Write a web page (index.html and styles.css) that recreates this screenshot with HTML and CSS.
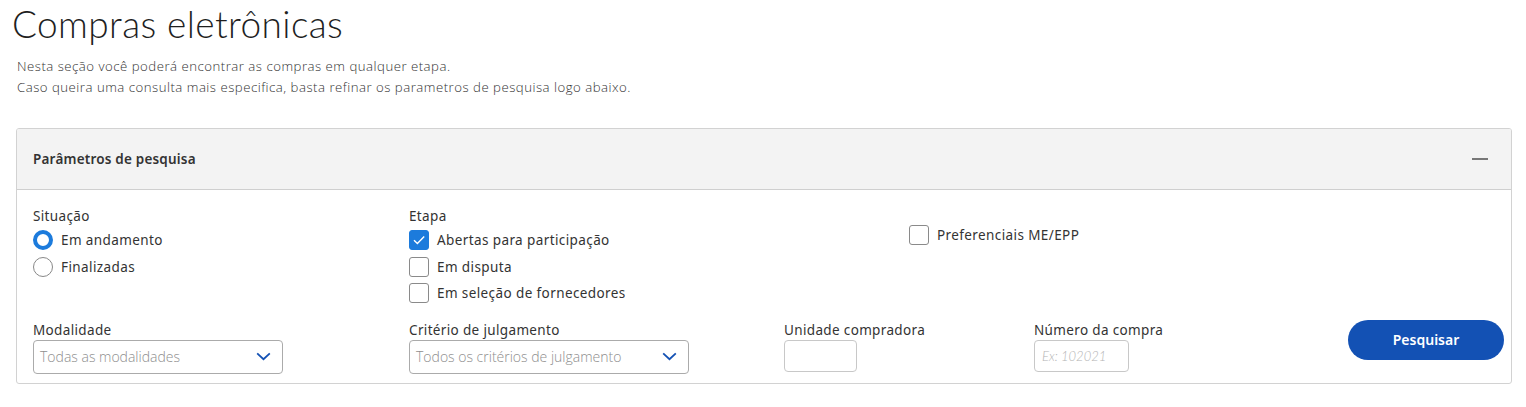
FILE: index.html
```html
<!DOCTYPE html>
<html lang="pt-BR">
<head>
<meta charset="utf-8">
<title>Compras eletrônicas</title>
<link rel="stylesheet" href="styles.css">
</head>
<body>
<main class="page">
  <h1 class="title">Compras eletrônicas</h1>
  <p class="intro">Nesta seção você poderá encontrar as compras em qualquer etapa.<br>Caso queira uma consulta mais especifica, basta refinar os parametros de pesquisa logo abaixo.</p>

  <section class="panel">
    <header class="panel-head">
      <span class="panel-title">Parâmetros de pesquisa</span>
      <span class="collapse" aria-hidden="true"></span>
    </header>
    <div class="panel-body">
      <div class="row row-top">
        <div class="col col-a">
          <div class="label">Situação</div>
          <label class="opt"><span class="radio on"></span>Em andamento</label>
          <label class="opt"><span class="radio"></span>Finalizadas</label>
        </div>
        <div class="col col-b">
          <div class="label">Etapa</div>
          <label class="opt"><span class="check on"><svg viewBox="0 0 20 20" width="20" height="20"><path d="M5 10.2 L8.4 13.6 L15.2 6.6" fill="none" stroke="#fff" stroke-width="1.4"/></svg></span>Abertas para participação</label>
          <label class="opt"><span class="check"></span>Em disputa</label>
          <label class="opt"><span class="check"></span>Em seleção de fornecedores</label>
        </div>
        <div class="col col-c">
          <label class="opt"><span class="check"></span>Preferenciais ME/EPP</label>
        </div>
      </div>
      <div class="row row-bottom">
        <div class="field f-mod">
          <div class="label">Modalidade</div>
          <div class="select w-mod"><span>Todas as modalidades</span><svg viewBox="0 0 16 10" width="15" height="9"><path d="M1 1.5 L8 8 L15 1.5" fill="none" stroke="#1351b4" stroke-width="2"/></svg></div>
        </div>
        <div class="field f-crit">
          <div class="label">Critério de julgamento</div>
          <div class="select w-crit"><span>Todos os critérios de julgamento</span><svg viewBox="0 0 16 10" width="15" height="9"><path d="M1 1.5 L8 8 L15 1.5" fill="none" stroke="#1351b4" stroke-width="2"/></svg></div>
        </div>
        <div class="field f-uni">
          <div class="label">Unidade compradora</div>
          <div class="input w-uni"></div>
        </div>
        <div class="field f-num">
          <div class="label">Número da compra</div>
          <div class="input w-num"><span class="ph">Ex: 102021</span></div>
        </div>
        <button class="btn">Pesquisar</button>
      </div>
    </div>
  </section>
</main>
</body>
</html>
```

FILE: styles.css
```css
* { box-sizing: border-box; }
html, body { margin: 0; padding: 0; background: #fff; }
body { font-family: "Lato", "Open Sans", sans-serif; color: #333; }

.page { padding: 0 15px 0 16px; }

.title {
  margin: 0;
  padding-top: 3px;
  margin-left: -4px;
  font-family: "Lato", sans-serif;
  font-weight: 300;
  font-size: 37px;
  line-height: 42px;
  color: #1f1f1f;
  letter-spacing: 0.4px;
}

.intro {
  margin: 11px 0 0 1px;
  font-family: "Open Sans", sans-serif;
  font-weight: 300;
  font-size: 13.2px;
  line-height: 21px;
  letter-spacing: 0.5px;
  color: #333;
}

.panel {
  margin-top: 30px;
  width: 1496px;
  border: 1px solid #d2d2d2;
  border-radius: 3px;
  overflow: hidden;
}

.panel-head {
  height: 61px;
  background: #f3f3f3;
  border-bottom: 1px solid #cfcfcf;
  display: flex;
  align-items: center;
  justify-content: space-between;
  padding: 0 23px 0 16px;
}
.panel-title {
  font-family: "Noto Sans", sans-serif;
  font-weight: 600;
  font-size: 13.5px;
  letter-spacing: 0.2px;
  color: #333;
}
.collapse {
  width: 16px;
  height: 2px;
  background: #777;
}

.panel-body { padding: 16px 7px 9px 16px; }

.row { display: flex; }
.col-a { width: 376px; }
.col-b { width: 500px; }
.col-c { padding-top: 15px; }

.label {
  font-family: "Noto Sans", sans-serif;
  font-size: 13.5px;
  line-height: 20px;
  letter-spacing: 0.35px;
  color: #333;
  height: 20px;
}

.opt {
  display: flex;
  align-items: center;
  height: 26.5px;
  font-family: "Noto Sans", sans-serif;
  font-size: 13.5px;
  letter-spacing: 0.4px;
  color: #333;
}
.opt:first-of-type { margin-top: 1px; }

.radio {
  width: 20px; height: 20px;
  border-radius: 50%;
  border: 1px solid #888;
  margin-right: 8px;
  flex: none;
}
.radio.on { border: 4.5px solid #1c7bdc; }

.check {
  width: 20px; height: 20px;
  border-radius: 3px;
  border: 1px solid #8a8a8a;
  margin-right: 8px;
  flex: none;
  display: flex;
}
.check.on { background: #1c7bdc; border-color: #1c7bdc; }
.check.on svg { margin: -1px; }

.row-bottom { margin-top: 13px; align-items: flex-start; }
.f-mod { width: 376px; }
.f-crit { width: 375px; }
.f-uni { width: 250px; }
.f-num { flex: 1; }

.select, .input {
  border: 1px solid #ababab;
  border-radius: 4px;
  display: flex;
  align-items: center;
}
.select {
  height: 34px;
  justify-content: space-between;
  padding: 0 11px 0 6px;
  font-family: "Open Sans", sans-serif;
  font-weight: 300;
  font-size: 14px;
  color: #8e8e8e;
}
.select svg { flex: none; }
.w-mod { width: 250px; }
.w-crit { width: 280px; }

.input { height: 32px; border-color: #c8c8c8; }
.w-uni { width: 73px; }
.w-num { width: 95px; padding-left: 7px; }
.ph {
  font-family: "Lato", sans-serif;
  font-style: italic;
  font-weight: 300;
  font-size: 13px;
  color: #b4b4b4;
}

.btn {
  margin-top: 0;
  width: 156px;
  height: 40px;
  border: none;
  border-radius: 20px;
  background: #1351b4;
  color: #fff;
  font-family: "Noto Sans", sans-serif;
  font-weight: 600;
  font-size: 14px;
  cursor: pointer;
}
```
